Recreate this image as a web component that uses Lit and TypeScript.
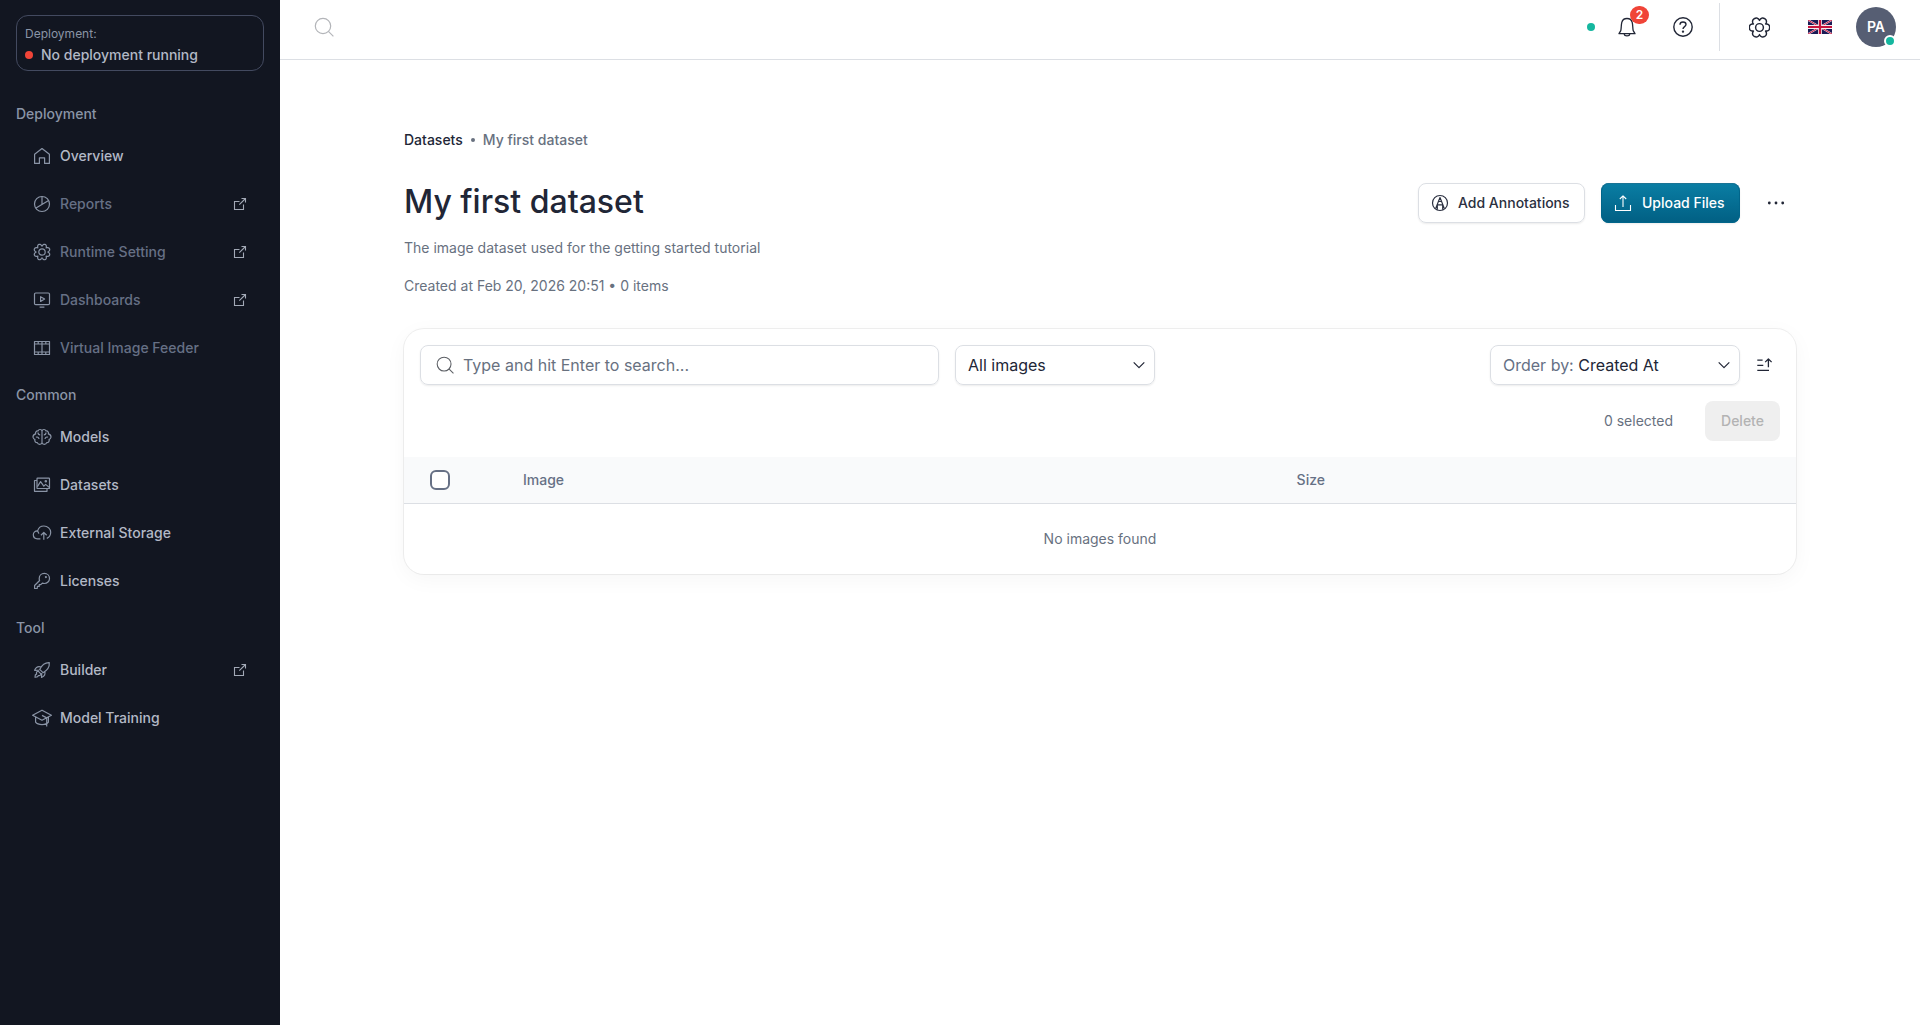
import { LitElement, html, css, svg, nothing, TemplateResult } from "lit";
import { customElement, property } from "lit/decorators.js";

/** Closed gear outline: broad rounded teeth separated by narrow notches. */
function gearPath(c: number, radius: number, notch: number, lobes: number, phase: number, flat = 1.15): string {
  const steps = 144;
  const points: string[] = [];
  for (let i = 0; i < steps; i++) {
    const t = (i / steps) * Math.PI * 2;
    const w = Math.abs(Math.cos((lobes * (t - phase)) / 2));
    const r = radius - notch * Math.pow(1 - w, flat);
    points.push(`${(c + r * Math.cos(t)).toFixed(2)} ${(c + r * Math.sin(t)).toFixed(2)}`);
  }
  return `M${points.join("L")}Z`;
}

const icons: Record<string, TemplateResult> = {
  house: svg`<path d="M2.600 17.400V8.300L10 2.500l7.400 5.800v9.100h-4.800v-5.600H7.400v5.600z"/>`,
  pie: svg`<circle cx="10" cy="10" r="7.500"/><path d="M10 2.500V10M3.600 14.200 16.600 6.400"/>`,
  gear8: svg`<path d=${gearPath(10, 8.2, 2.4, 8, Math.PI / 8)}/><circle cx="10" cy="10" r="3.200"/>`,
  screen: svg`<rect x="2.500" y="3" width="15" height="11.600" rx="1.200"/><path d="M7.600 17.200h4.800M8.600 6.700v4.800l4-2.400z"/>`,
  film: svg`<path d="M2.500 3.500h15v13h-15zM2.500 6h15M2.500 14h15M10 3.500v13M6.200 3.500V6M13.800 3.500V6M6.200 14v2.500M13.800 14v2.500"/>`,
  brain: svg`<path d="M10 4.200C9.600 2.100 6.800 1.900 6 4 4.200 3.700 3.100 5.400 3.700 6.900 1.900 7.400.8 9 1.100 10.500c.2 1 1 1.700 1.800 1.900-.4 2 .7 3.400 2.400 3.300.7 2.300 4.200 2.200 4.700 0zM10 4.200c.4-2.100 3.200-2.300 4-.2 1.800-.3 2.900 1.400 2.300 2.900 1.800.5 2.900 2.100 2.600 3.600-.2 1-1 1.700-1.800 1.900.4 2-.7 3.400-2.400 3.300-.7 2.300-4.200 2.200-4.700 0"/><path d="M6 5.500c0 1.400.8 2.300 2.200 2.300M14 5.500c0 1.400-.8 2.300-2.200 2.300M3.900 10.200c1.500-.6 2.900.3 3.100 1.800M16.100 10.200c-1.500-.6-2.900.3-3.100 1.800"/>`,
  images: svg`<rect x="5" y="3.200" width="12.500" height="10.300" rx=".6"/><path d="M5 5.500H2.500v10.800H15v-2.800M5.400 11.600l3.200-5 3.200 4.600 1.800-1.800 3.600 3"/><circle cx="13.800" cy="6.300" r=".7"/>`,
  cloud: svg`<path d="M8.400 15.800H5.400c-2.400 0-4.100-1.700-4.100-4s2-4.100 4.300-3.900c.9-3.100 3.300-4.900 6.300-4.900 3.700 0 6.800 2.900 6.800 6.300 0 2.900-1.500 5.100-3.900 6.100M11.800 16.800V9.600M8.900 12.300l2.900-2.800 2.900 2.800M6.800 10.600c-.2-.9-.8-1.900-1.200-2.700"/>`,
  key: svg`<path d="M12.300 2.400c3 0 5.200 2.200 5.200 5s-2.300 5.100-5.200 5.100c-.8 0-1.300-.1-1.900-.4l-1.600 1.600H7.200v1.700H5.400l-.2 2.100H2.600v-3l5-5c-.3-.7-.4-1.300-.4-2.100 0-2.800 2.200-5 5.100-5z"/><circle cx="13.900" cy="6.100" r=".5"/>`,
  rocket: svg`<path d="M17.300 2.600c-4.300-.2-7.500 2.600-9.600 6.800l3.300 3.300c4-2.200 6.700-5.600 6.300-10.100zM9.200 7.100C6.200 6 4 7.200 2.600 10.300l4.600-.1M12.700 11.200c1 3-.3 5.100-3.200 6.300l.3-4.400M6.200 11.200c-1.700.2-2.100 1.500-1.500 2.700-1.500.5-1.800 1.900-1.700 3.300 1.800.2 3-.3 3.500-1.700 1.400.3 2.300-.3 2.400-1.600z"/>`,
  cap: svg`<path d="M10 2.200.6 7.200 10 12.200l9.400-5zM3.600 8.900v5.300c2.400 3.200 10.400 3.200 12.800 0V8.900M10 7.400l4.700 2.500v8.600"/>`,
  external: svg`<path d="M9.500 7.500h-5v8h9v-5M11.500 4.500h4v4M15.500 4.500 9.300 10.700" stroke-linejoin="miter"/>`,
  search: svg`<circle cx="9" cy="9" r="7.700"/><path d="m14.400 14.400 5 5"/>`,
  bell: svg`<path d="M2 16.700h16L16.200 13.700c-.6-3-.3-5.600-1-8.300C14.600 3 12.600 1.500 10 1.500S5.400 3 4.800 5.400c-.7 2.700-.4 5.300-1 8.300zM7.200 17c.3 2.600 5.300 2.600 5.600 0"/>`,
  help: svg`<circle cx="10" cy="10" r="9.200"/><path d="M7 7.700c0-1.700 1.300-2.700 3-2.700s3 1.100 3 2.600c0 2-3 2.100-3 4.300"/><circle cx="10" cy="14.600" r=".5"/>`,
  gear6: svg`<path d=${gearPath(10, 9.700, 3, 6, 0, 1.500)}/><circle cx="10" cy="10" r="3.700"/>`,
  annotate: svg`<circle cx="10" cy="10" r="7.500"/><path d="M5.600 15.600 10 4.500l4.400 11.100M7.400 11.900h5.200M8.700 8.500h2.600M7.300 12v4.800M12.700 12v4.800"/>`,
  upload: svg`<path d="M2.500 12v5.500h15V12M10 14V3M6.800 6 10 2.800 13.200 6"/>`,
  dots: svg`<g fill="currentColor" stroke="none"><circle cx="3.300" cy="10" r="1.400"/><circle cx="10" cy="10" r="1.400"/><circle cx="16.700" cy="10" r="1.400"/></g>`,
  chevron: svg`<path d="m4.700 7.300 5.300 5.400 5.300-5.400"/>`,
  sort: svg`<path d="M3.300 5.200h5.300M3.300 10.400h6M3.300 15.400H15M14.400 12.300V4M11.200 7.100 14.400 3.900 17.600 7.100"/>`,
};

@customElement("ui-icon")
export class UiIcon extends LitElement {
  @property() name = "";
  @property({ type: Number }) size = 20;
  @property({ type: Number }) weight = 1;

  static styles = css`
    :host { display: block; flex: none; line-height: 0; }
    .glyph { display: block; fill: none; stroke: currentColor; stroke-linejoin: round; }
  `;

  render() {
    return html`<svg class="glyph" width=${this.size} height=${this.size} viewBox="0 0 20 20" stroke-width=${this.weight}>${icons[this.name]}</svg>`;
  }
}

interface NavItem { icon: string; label: string; muted?: boolean; external?: boolean; }
interface NavGroup { title: string; items: NavItem[]; }

const groups: NavGroup[] = [
  {
    title: "Deployment",
    items: [
      { icon: "house", label: "Overview" },
      { icon: "pie", label: "Reports", muted: true, external: true },
      { icon: "gear8", label: "Runtime Setting", muted: true, external: true },
      { icon: "screen", label: "Dashboards", muted: true, external: true },
      { icon: "film", label: "Virtual Image Feeder", muted: true },
    ],
  },
  {
    title: "Common",
    items: [
      { icon: "brain", label: "Models" },
      { icon: "images", label: "Datasets" },
      { icon: "cloud", label: "External Storage" },
      { icon: "key", label: "Licenses" },
    ],
  },
  {
    title: "Tool",
    items: [
      { icon: "rocket", label: "Builder", external: true },
      { icon: "cap", label: "Model Training" },
    ],
  },
];

@customElement("side-nav")
export class SideNav extends LitElement {
  static styles = css`
    :host { display: block; width: 280px; flex: none; background: #121621; color: #b3b9c6; box-sizing: border-box; padding: 15px 16px 0; font-weight: 500; font-size: 14px; }
    .status { box-sizing: border-box; height: 56px; border: 1px solid #434a60; border-radius: 12px; padding: 8px 8px 0; margin-bottom: 16px; }
    .caption { font-size: 12px; font-weight: 400; line-height: 20px; color: #8a94a6; }
    .state { display: flex; align-items: center; gap: 8px; line-height: 22px; }
    .light { width: 8px; height: 8px; border-radius: 50%; background: #f04438; }
    .title { padding: 16px 0 11px; line-height: 22px; color: #8a94a6; }
    .items { display: flex; flex-direction: column; gap: 8px; }
    .item { display: flex; align-items: center; height: 40px; padding: 0 14px 0 16px; line-height: 22px; }
    .label { flex: 1; padding-left: 8px; }
    .muted .label { color: #667085; }
    .icon { color: #8a94a6; }
    .out { color: #a2a9b6; }
  `;

  render() {
    return html`
      <div class="status">
        <div class="caption">Deployment:</div>
        <div class="state"><span class="light"></span>No deployment running</div>
      </div>
      ${groups.map((g) => html`
        <div class="title">${g.title}</div>
        <div class="items">
          ${g.items.map((i) => html`
            <div class="item ${i.muted ? "muted" : ""}">
              <ui-icon class="icon" name=${i.icon} weight="1.2"></ui-icon>
              <span class="label">${i.label}</span>
              ${i.external ? html`<ui-icon class="out" name="external" weight="1.1"></ui-icon>` : nothing}
            </div>`)}
        </div>`)}
    `;
  }
}

@customElement("top-bar")
export class TopBar extends LitElement {
  static styles = css`
    :host { display: flex; align-items: center; box-sizing: border-box; height: 60px; padding: 0 24px 5px 34px; border-bottom: 1px solid #dcdfe4; color: #212636; }
    .search { color: #b3b5b9; flex: 1; }
    .dot { width: 8px; height: 8px; border-radius: 50%; background: #15b79f; margin-right: 22px; }
    .bell { position: relative; margin-right: 36px; }
    .count { position: absolute; left: 13px; top: -11px; width: 19px; height: 18px; border-radius: 9px; background: #f04438; color: #fff; font-size: 12px; font-weight: 600; line-height: 18px; text-align: center; }
    .rule { width: 1px; height: 48px; background: #dcdfe4; margin: 0 29px 0 26px; }
    .flag { display: block; margin: 0 24px 0 38px; }
    .avatar { position: relative; width: 40px; height: 40px; border-radius: 50%; background: #565e73; color: #fff; font-size: 14px; font-weight: 600; line-height: 40px; text-align: center; }
    .online { position: absolute; right: 0; bottom: 0; width: 8px; height: 8px; border: 2px solid #fff; border-radius: 50%; background: #15b79f; }
  `;

  render() {
    return html`
      <ui-icon class="search" name="search" weight="1.2"></ui-icon>
      <span class="dot"></span>
      <div class="bell"><ui-icon name="bell" weight="1.3"></ui-icon><span class="count">2</span></div>
      <ui-icon name="help" weight="1.4"></ui-icon>
      <span class="rule"></span>
      <ui-icon name="gear6" size="21" weight="1.4"></ui-icon>
      <svg class="flag" width="24" height="14" viewBox="0 0 24 14">
        <rect width="24" height="14" fill="#1a1a55"></rect>
        <path d="M0 0 24 14M24 0 0 14" stroke="#efe6ee" stroke-width="1.9"></path>
        <path d="M0 0 24 14M24 0 0 14" stroke="#c8143c" stroke-width="1"></path>
        <path d="M12 0V14M0 7H24" stroke="#f6eef2" stroke-width="3.8"></path>
        <path d="M12 0V14M0 7H24" stroke="#c8143c" stroke-width="2.2"></path>
      </svg>
      <div class="avatar">PA<span class="online"></span></div>
    `;
  }
}

@customElement("dataset-card")
export class DatasetCard extends LitElement {
  static styles = css`
    :host { display: block; border-radius: 20px; overflow: hidden; background: #fff; box-shadow: 0 5px 22px rgba(0, 0, 0, 0.04), 0 0 0 1px rgba(0, 0, 0, 0.06); color: #667085; font-size: 14px; line-height: 22px; }
    .tools { display: flex; align-items: center; gap: 16px; padding: 16px 16px 0; }
    .field { display: flex; align-items: center; box-sizing: border-box; height: 40px; border: 1px solid #dcdfe4; border-radius: 8px; box-shadow: 0 1px 2px rgba(0, 0, 0, 0.08); font-size: 16px; }
    .query { width: 519px; padding-left: 15px; gap: 9px; color: #68717f; }
    .lens { color: #5d6066; }
    .select { justify-content: space-between; padding: 0 5px 0 12px; color: #212636; }
    .filter { width: 200px; }
    .order { width: 250px; margin-left: auto; }
    .prefix { color: #667085; }
    .sort { color: #212636; margin-right: 6px; margin-left: -2px; }
    .bulk { display: flex; align-items: center; justify-content: flex-end; gap: 32px; padding: 16px; color: #68717f; }
    .delete { width: 75px; height: 40px; border-radius: 8px; background: #efefef; color: #b3b3b3; font-weight: 500; line-height: 40px; text-align: center; }
    .head { display: grid; grid-template-columns: 119px 773.6px 1fr; align-items: center; height: 46px; background: #f9fafb; border-bottom: 1px solid #dcdfe4; font-weight: 500; }
    .check { box-sizing: border-box; width: 20px; height: 20px; margin-left: 26px; border: 2px solid #667085; border-radius: 6px; background: #fff; }
    .empty { height: 70px; line-height: 70px; text-align: center; color: #68717f; }
  `;

  render() {
    return html`
      <div class="tools">
        <div class="field query"><ui-icon class="lens" name="search" size="18" weight="1.2"></ui-icon>Type and hit Enter to search...</div>
        <div class="field select filter">All images<ui-icon name="chevron" weight="1.2"></ui-icon></div>
        <div class="field select order"><span><span class="prefix">Order by:</span> Created At</span><ui-icon name="chevron" weight="1.2"></ui-icon></div>
        <ui-icon class="sort" name="sort" weight="1.3"></ui-icon>
      </div>
      <div class="bulk"><span>0 selected</span><span class="delete">Delete</span></div>
      <div class="head"><span class="check"></span><span>Image</span><span>Size</span></div>
      <div class="empty">No images found</div>
    `;
  }
}

@customElement("app-root")
export class AppRoot extends LitElement {
  static styles = css`
    :host { display: flex; height: 1025px; background: #fff; font-family: Inter, sans-serif; color: #212636; font-size: 14px; }
    .main { flex: 1; min-width: 0; }
    .content { width: 1392px; margin: 0 auto; padding-top: 69px; }
    .crumbs { display: flex; align-items: center; gap: 8px; font-weight: 500; line-height: 22px; color: #68717f; }
    .current { color: #212636; }
    .bullet { width: 4px; height: 4px; border-radius: 50%; background: #68717f; }
    .heading { display: flex; align-items: center; gap: 16px; margin-top: 32px; height: 40px; }
    .name { flex: 1; margin: 0; font-size: 32px; font-weight: 500; line-height: 38px; padding-bottom: 2px; }
    .button { display: flex; align-items: center; box-sizing: border-box; height: 40px; border-radius: 8px; gap: 8px; font-weight: 500; line-height: 22px; }
    .plain { width: 167px; padding-left: 11px; border: 1px solid #dcdfe4; box-shadow: 0 1px 2px rgba(0, 0, 0, 0.08); color: #2b3040; }
    .primary { width: 139px; padding-left: 12px; gap: 9px; color: #fff; background: linear-gradient(180deg, #0a7ea4, #015f83); box-shadow: inset 0 1px 0 rgba(255, 255, 255, 0.1), inset 0 0 0 1px #01658a, 0 1px 2px rgba(0, 0, 0, 0.08); }
    .more { width: 40px; display: flex; justify-content: center; }
    .text { margin: 14px 0 16px; line-height: 22px; color: #68717f; }
    .meta { margin: 0 0 32px; line-height: 22px; color: #68717f; }
  `;

  render() {
    return html`
      <side-nav></side-nav>
      <div class="main">
        <top-bar></top-bar>
        <div class="content">
          <div class="crumbs"><span class="current">Datasets</span><span class="bullet"></span><span>My first dataset</span></div>
          <div class="heading">
            <h1 class="name">My first dataset</h1>
            <div class="button plain"><ui-icon name="annotate" weight="1.2"></ui-icon>Add Annotations</div>
            <div class="button primary"><ui-icon name="upload" weight="1.1"></ui-icon>Upload Files</div>
            <div class="more"><ui-icon name="dots"></ui-icon></div>
          </div>
          <p class="text">The image dataset used for the getting started tutorial</p>
          <p class="meta">Created at Feb 20, 2026 20:51 • 0 items</p>
          <dataset-card></dataset-card>
        </div>
      </div>
    `;
  }
}
